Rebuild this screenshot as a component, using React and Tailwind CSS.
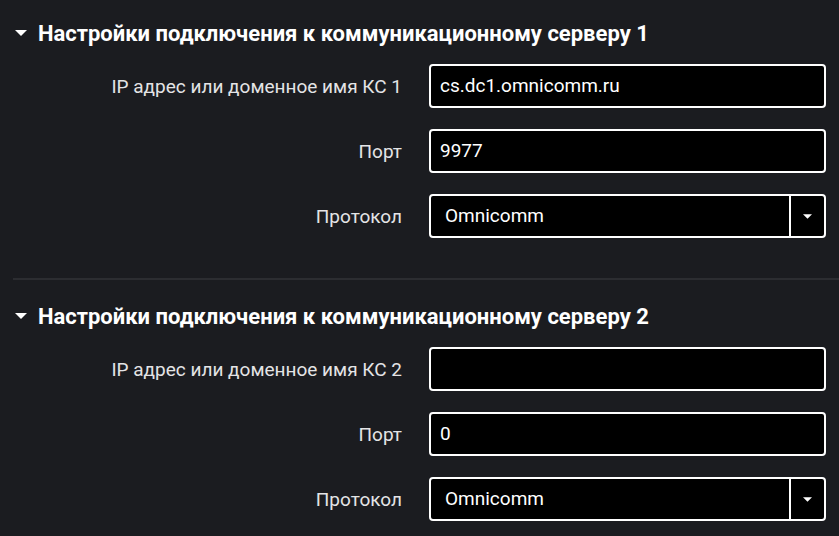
import React from 'react';

const font = { fontFamily: 'Roboto, "Noto Sans", sans-serif' };

function Caret({ className }) {
  return (
    <svg viewBox="0 0 12 6" className={className} fill="currentColor">
      <path d="M0 0h12L6 6z" />
    </svg>
  );
}

function Row({ label, children }) {
  return (
    <div className="flex items-center h-[44px]">
      <div className="w-[402px] text-right text-[19px] text-[#e4e4e6] leading-none">{label}</div>
      <div className="ml-[27px] w-[397px]">{children}</div>
    </div>
  );
}

function TextField({ value }) {
  return (
    <div className="h-[44px] rounded-[4px] border-2 border-white bg-black flex items-center pl-[9px] text-[19px] text-white">
      {value}
    </div>
  );
}

function SelectField({ value }) {
  return (
    <div className="h-[44px] rounded-[4px] border-2 border-white bg-black flex items-stretch text-[19px] text-white">
      <div className="flex-1 flex items-center pl-[14px]">{value}</div>
      <div className="w-[2px] bg-white" />
      <div className="w-[33px] flex items-center justify-center">
        <Caret className="w-[9px] h-[5px] text-white" />
      </div>
    </div>
  );
}

function Section({ n, host, port }) {
  return (
    <div>
      <div className="flex items-center h-[30px] pl-[15px]">
        <Caret className="w-[12px] h-[6px] text-white" />
        <span className="ml-[11px] text-[22px] font-bold text-white">
          Настройки подключения к коммуникационному серверу {n}
        </span>
      </div>
      <div className="mt-[16px] flex flex-col gap-[21px]">
        <Row label={`IP адрес или доменное имя КС ${n}`}>
          <TextField value={host} />
        </Row>
        <Row label="Порт">
          <TextField value={port} />
        </Row>
        <Row label="Протокол">
          <SelectField value="Omnicomm" />
        </Row>
      </div>
    </div>
  );
}

export default function App() {
  return (
    <div className="w-[839px] h-[536px] overflow-hidden bg-[#1b1c20] pt-[18px]" style={font}>
      <Section n={1} host="cs.dc1.omnicomm.ru" port="9977" />
      <div className="ml-[13px] mt-[40px] h-[2px] bg-[#2c2d31]" />
      <div className="mt-[21px]">
        <Section n={2} host="" port="0" />
      </div>
    </div>
  );
}
